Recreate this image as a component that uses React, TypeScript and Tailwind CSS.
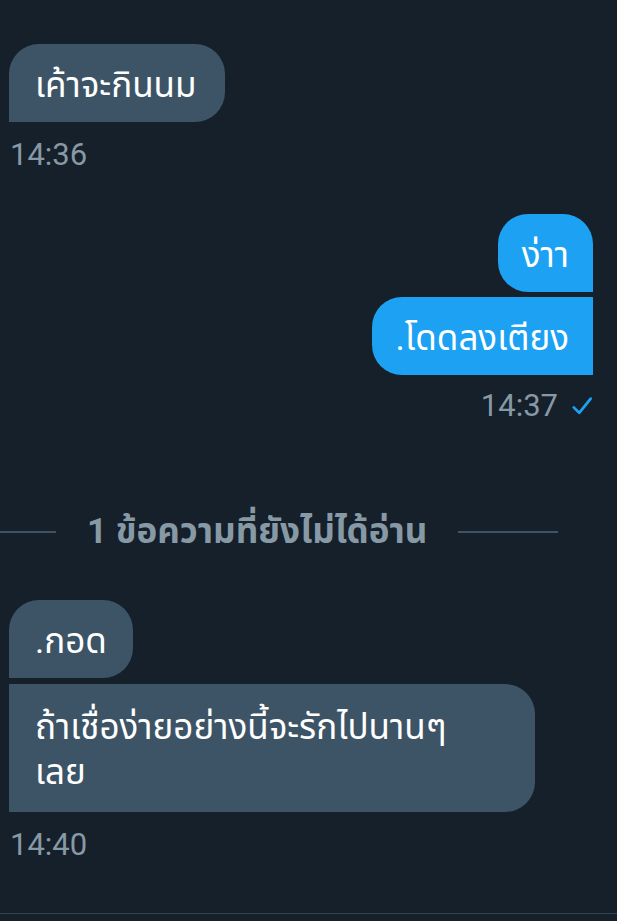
export default function App() {
  return (
    <main
      className="min-h-[921px] w-full bg-[#15202b] overflow-hidden flex flex-col"
      style={{ fontFamily: 'Roboto, "Noto Sans Thai", "Noto Sans", sans-serif' }}
    >
      <div className="flex flex-col pl-[9px] pr-[24px] pt-[44px]">
        {/* received */}
        <div className="flex flex-col items-start">
          <div className="rounded-[30px] rounded-bl-none bg-[#3d5466] pl-[26px] pr-[28px] pt-[20px] pb-[14px] text-[35px] leading-[44px] text-white">
            เค้าจะกินนม
          </div>
          <div className="mt-[16px] pl-[1px] text-[31px] leading-[34px] text-[#8899a6]">14:36</div>
        </div>

        {/* sent */}
        <div className="mt-[42px] flex flex-col items-end gap-[5px]">
          <div className="rounded-[30px] rounded-br-none bg-[#1da1f2] px-[24px] pt-[20px] pb-[14px] text-[35px] leading-[44px] text-white">
            ง่าา
          </div>
          <div className="rounded-[30px] rounded-r-none bg-[#1da1f2] px-[24px] pt-[20px] pb-[14px] text-[35px] leading-[44px] text-white">
            .โดดลงเตียง
          </div>
          <div className="mt-[9px] flex items-center gap-[13px] text-[31px] leading-[34px] text-[#8899a6]">
            <span>14:37</span>
            <svg className="h-[22px] w-[22px] text-[#1da1f2]" viewBox="0 0 24 24" fill="none" stroke="currentColor" strokeWidth="3" strokeLinecap="round" strokeLinejoin="round">
              <path d="M3 13.5l6 6L21.5 4" />
            </svg>
          </div>
        </div>
      </div>

      {/* unread divider */}
      <div className="mt-[89px] flex items-center">
        <div className="h-[2px] w-[56px] bg-[#3d5466]" />
        <div className="px-[31px] text-[35px] font-bold leading-[40px] text-[#8899a6]">1 ข้อความที่ยังไม่ได้อ่าน</div>
        <div className="h-[2px] w-[100px] bg-[#3d5466]" />
      </div>

      <div className="flex flex-col items-start gap-[6px] pl-[9px] pr-[82px] pt-[48px]">
        <div className="rounded-[30px] rounded-bl-none bg-[#3d5466] px-[26px] pt-[20px] pb-[14px] text-[35px] leading-[44px] text-white">
          .กอด
        </div>
        <div className="w-full rounded-[30px] rounded-l-none bg-[#3d5466] px-[26px] pt-[21px] pb-[17px] text-[35px] leading-[45px] text-white">
          ถ้าเชื่อง่ายอย่างนี้จะรักไปนานๆ
          <br />
          เลย
        </div>
        <div className="mt-[10px] pl-[1px] text-[31px] leading-[34px] text-[#8899a6]">14:40</div>
      </div>

      <div className="mt-auto h-[8px] border-t border-[#38444d]" />
    </main>
  );
}
